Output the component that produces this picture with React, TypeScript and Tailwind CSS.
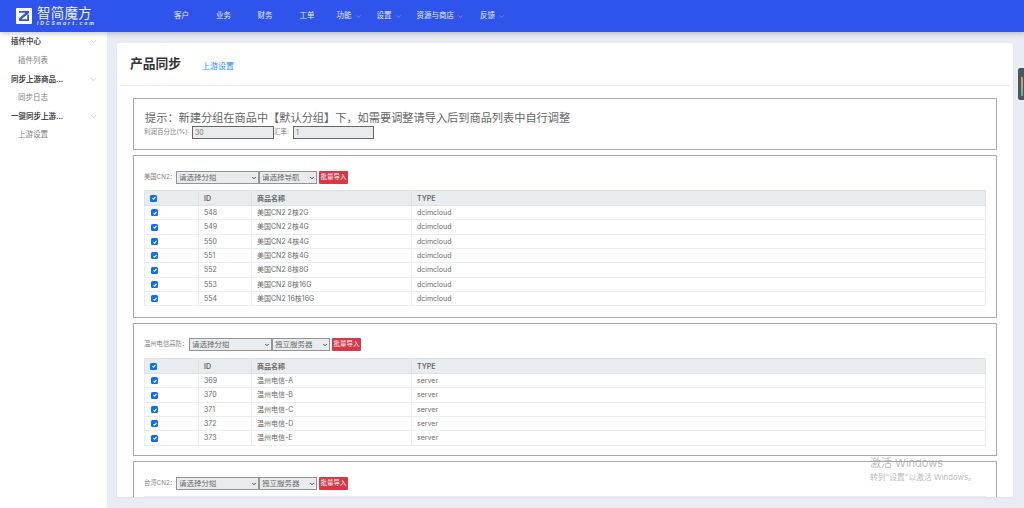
import React from "react";
import { ChevronDown } from "lucide-react";

const FONT = "font-['Inter','Noto_Sans_CJK_SC',sans-serif]";

function Box() {
  return (
    <span className="inline-flex w-[7px] h-[7px] rounded-[1.5px] bg-[#0d6efd] items-center justify-center align-middle">
      <svg viewBox="0 0 8 8" className="w-[6px] h-[6px]" fill="none" stroke="#fff" strokeWidth="1.4">
        <path d="M2 4.2 L3.5 5.6 L6 2.6" />
      </svg>
    </span>
  );
}

const thCls = "h-[15px] p-0 pl-[5px] text-left font-semibold border border-[#dee2e6]";
const tdCls = "h-[14.33px] p-0 pl-[5px] border border-[#e9edf1] font-normal";

function ProductTable({ rows }: { rows: [number, string, string][] }) {
  return (
    <table className="w-[842px] table-fixed border-collapse text-[7px] text-[#6a6a6a] leading-none">
      <colgroup>
        <col className="w-[54px]" />
        <col className="w-[53px]" />
        <col className="w-[160px]" />
        <col />
      </colgroup>
      <thead>
        <tr className="bg-[#e9ecef] text-[#666]">
          <th className={thCls}><Box /></th>
          <th className={thCls}>ID</th>
          <th className={thCls}>商品名称</th>
          <th className={thCls}>TYPE</th>
        </tr>
      </thead>
      <tbody>
        {rows.map((r) => (
          <tr key={r[0]}>
            <td className={tdCls}><span className="ml-[1px]"><Box /></span></td>
            <td className={tdCls}>{r[0]}</td>
            <td className={tdCls}>{r[1]}</td>
            <td className={tdCls}>{r[2]}</td>
          </tr>
        ))}
      </tbody>
    </table>
  );
}

function Select({ value, w }: { value: string; w: string }) {
  return (
    <span className={`relative block h-[13px] ${w}`}>
      <select
        className="block w-full h-[13px] appearance-none border border-[#949494] bg-[#e9ecef] text-[7.5px] leading-none text-[#666] pl-[2px] pr-[8px] rounded-none"
        defaultValue="a"
      >
        <option value="a">{value}</option>
      </select>
      <ChevronDown className="absolute right-[2px] top-[3.5px] w-[6px] h-[6px] text-[#333] pointer-events-none" strokeWidth={3.5} />
    </span>
  );
}

function Toolbar({ label, nav, lw }: { label: string; nav: string; lw: string }) {
  return (
    <div className="flex items-center h-[13px] text-[6.3px] text-[#808080]">
      <span className={`whitespace-nowrap ${lw}`}>{label}</span>
      <Select value="请选择分组" w="w-[83px]" />
      <Select value={nav} w="w-[58px]" />
      <button className="ml-[2px] w-[29px] h-[13px] bg-[#dc3545] text-white text-[6.5px] rounded-[1px] leading-none">
        批量导入
      </button>
    </div>
  );
}

const usRows: [number, string, string][] = [
  [548, "美国CN2 2核2G", "dcimcloud"],
  [549, "美国CN2 2核4G", "dcimcloud"],
  [550, "美国CN2 4核4G", "dcimcloud"],
  [551, "美国CN2 8核4G", "dcimcloud"],
  [552, "美国CN2 8核8G", "dcimcloud"],
  [553, "美国CN2 8核16G", "dcimcloud"],
  [554, "美国CN2 16核16G", "dcimcloud"],
];
const wzRows: [number, string, string][] = [
  [369, "温州电信-A", "server"],
  [370, "温州电信-B", "server"],
  [371, "温州电信-C", "server"],
  [372, "温州电信-D", "server"],
  [373, "温州电信-E", "server"],
];

function NavItem({ t, cls, chev }: { t: string; cls: string; chev?: boolean }) {
  return (
    <span className={`flex items-center whitespace-nowrap ${cls}`}>
      {t}
      {chev && <ChevronDown className="w-[7px] h-[7px] ml-[3px] text-[#a9bcf7]" strokeWidth={1.5} />}
    </span>
  );
}

function SideHead({ t }: { t: string }) {
  return (
    <div className="h-[18.67px] flex items-center justify-between pl-[11px] pr-[9px] text-[7.5px] font-semibold text-[#4a4a4a]">
      <span className="whitespace-nowrap">{t}</span>
      <ChevronDown className="w-[9px] h-[9px] text-[#a8a8a8]" strokeWidth={1.25} />
    </div>
  );
}
function SideSub({ t }: { t: string }) {
  return <div className="h-[18.67px] flex items-center pl-[18px] text-[7.5px] text-[#808080]">{t}</div>;
}

export default function App() {
  return (
    <div className={`relative w-[1024px] h-[508px] overflow-hidden bg-[#e9ecf2] flex flex-col ${FONT}`}>
      <header className="relative z-10 h-[32px] shrink-0 bg-[#2f54eb] shadow-[0_2px_5px_rgba(0,0,0,0.2)] flex items-center text-white">
        <div className="w-[174px] shrink-0 pl-[16px] flex items-center">
          <svg viewBox="0 0 16 16" className="w-[16px] h-[16px] shrink-0">
            <path fill="#fff" fillRule="evenodd" d="M1 0 H15 Q16 0 16 1 V15 Q16 16 15 16 H1 Q0 16 0 15 V1 Q0 0 1 0 Z M3 3 V4.8 H9.6 L3 10.2 V13 H13 V6.5 H11.2 V11.2 H5.4 L13 5 V3 Z" />
          </svg>
          <div className="ml-[5px] flex flex-col leading-none">
            <span className="text-[13.5px] font-normal tracking-[0.2px] leading-[14px] text-[#eef1ff]">智简魔方</span>
            <span className="text-[5px] font-bold italic tracking-[1.9px] leading-[6px] text-[#dfe6ff] whitespace-nowrap">IDCSmart.com</span>
          </div>
        </div>
        <nav className="flex items-center text-[7.5px] text-[#e6ebff]">
          <NavItem t="客户" cls="mr-[27px]" />
          <NavItem t="业务" cls="mr-[26.5px]" />
          <NavItem t="财务" cls="mr-[27px]" />
          <NavItem t="工单" cls="mr-[22px]" />
          <NavItem t="功能" cls="mr-[15px]" chev />
          <NavItem t="设置" cls="mr-[15px]" chev />
          <NavItem t="资源与商店" cls="mr-[16px]" chev />
          <NavItem t="反馈" cls="" chev />
        </nav>
      </header>

      <div className="flex flex-1 min-h-0">
        <aside className="w-[107px] shrink-0 bg-white pt-[0.5px]">
          <SideHead t="插件中心" />
          <SideSub t="插件列表" />
          <SideHead t="同步上游商品..." />
          <SideSub t="同步日志" />
          <SideHead t="一键同步上游..." />
          <SideSub t="上游设置" />
        </aside>

        <main className="flex-1 min-w-0 pl-[10px] pr-[11px] pt-[11px]">
          <div className="h-[454px] bg-white rounded-[2px] overflow-hidden shadow-[0_1px_3px_rgba(0,0,0,0.05)]">
            <div className="h-[43px] mx-[3px] border-b border-[#eeeeee] flex items-center pl-[10px]">
              <h1 className="text-[12.75px] font-bold text-[#333] leading-none">产品同步</h1>
              <a className="ml-[21px] mt-[4px] text-[8px] text-[#1890ff] leading-none">上游设置</a>
            </div>

            <div className="px-[16px] pt-[12px] flex flex-col gap-[5px]">
              <section className="h-[52px] border border-[#a8a8a8] px-[10px] pt-[12px]">
                <p className="pl-[1px] text-[11.2px] leading-[14px] text-[#666] whitespace-nowrap">
                  提示：新建分组在商品中【默认分组】下，如需要调整请导入后到商品列表中自行调整
                </p>
                <div className="flex items-center mt-[1px] text-[6.5px] text-[#808080] whitespace-nowrap">
                  <span className="w-[48px]">利润百分比(%):</span>
                  <input readOnly value="30" className="w-[82px] h-[13px] border border-[#666] bg-[#e9ecef] pl-[2px] text-[7px] text-[#777] outline-none" />
                  <span className="w-[19px]">汇率:</span>
                  <input readOnly value="1" className="w-[81px] h-[13px] border border-[#666] bg-[#e9ecef] pl-[2px] text-[7px] text-[#777] outline-none" />
                </div>
              </section>

              <section className="h-[163px] border border-[#a8a8a8] px-[10px] pt-[15px] shrink-0">
                <Toolbar label="美国CN2：" lw="w-[32px]" nav="请选择导航" />
                <div className="mt-[6px]"><ProductTable rows={usRows} /></div>
              </section>

              <section className="h-[133px] border border-[#a8a8a8] px-[10px] pt-[14px] shrink-0">
                <Toolbar label="温州电信高防：" lw="w-[45px]" nav="独立服务器" />
                <div className="mt-[7px]"><ProductTable rows={wzRows} /></div>
              </section>

              <section className="h-[60px] border border-[#a8a8a8] px-[10px] pt-[15px] shrink-0">
                <Toolbar label="台湾CN2：" lw="w-[32px]" nav="独立服务器" />
                <div className="mt-[6px] w-[842px] h-[15px] bg-[#e9ecef]" />
              </section>
            </div>
          </div>
        </main>
      </div>

      <div className="absolute right-0 top-[68px] w-[6px] h-[32px] rounded-l-[2px] bg-[#4f5462] pl-[3px] pt-[9px]">
        <span className="block w-[2px] h-[19px] bg-gradient-to-b from-[#c9a24a] to-[#4fb8a0]" />
      </div>

      <div className="absolute left-[870px] top-[456px] text-[#9a9a9a]/70 leading-none pointer-events-none">
        <div className="text-[11px] leading-[14px]">激活 Windows</div>
        <div className="text-[7.8px] leading-[12px] mt-[1px] whitespace-nowrap">转到"设置"以激活 Windows。</div>
      </div>
    </div>
  );
}
